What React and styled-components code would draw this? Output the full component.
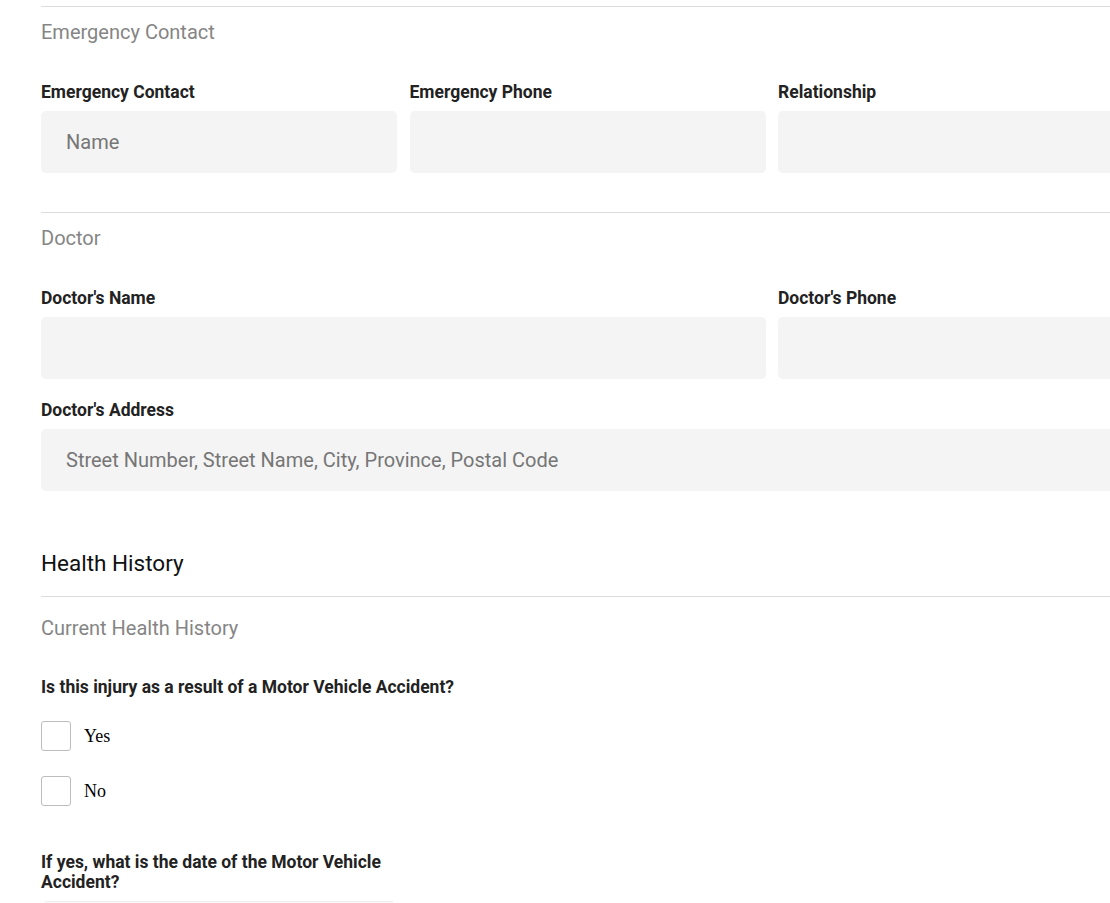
import React from 'react';
import styled, { createGlobalStyle } from 'styled-components';

const GlobalStyle = createGlobalStyle`
  html, body {
    margin: 0;
    padding: 0;
    background: #fff;
    overflow: hidden;
  }
  body {
    font-family: Roboto, "Liberation Sans", sans-serif;
  }
`;

const Page = styled.div`
  width: 1093px;
  padding: 6px 0 0 41px;
`;

const Rule = styled.hr`
  margin: 0;
  border: none;
  border-top: 1px solid #dcdcdc;
`;

const SectionTitle = styled.div`
  margin-top: ${(p) => p.$top || 13}px;
  font-size: 20px;
  line-height: 24px;
  color: #858585;
`;

const PageHeading = styled.h2`
  margin: 58px 0 19px;
  font-size: 22.5px;
  line-height: 28px;
  font-weight: 400;
  color: #111;
`;

const Grid = styled.div`
  display: grid;
  grid-template-columns: repeat(3, 356px);
  column-gap: 12.5px;
  row-gap: 21px;
  margin-top: 38px;
  margin-bottom: ${(p) => p.$bottom || 0}px;
`;

const Field = styled.div`
  display: flex;
  flex-direction: column;
  grid-column: span ${(p) => p.$span || 1};
`;

const Label = styled.label`
  font-size: 17.5px;
  line-height: 20px;
  font-weight: 700;
  color: #222;
  margin-bottom: 9px;
`;

const Input = styled.input`
  box-sizing: border-box;
  height: 62px;
  width: 100%;
  border: none;
  border-radius: 5px;
  background: #f4f4f4;
  padding: 0 25px;
  font-family: Roboto, "Liberation Sans", sans-serif;
  font-size: 20px;
  color: #333;
  outline: none;

  &::placeholder {
    color: #767676;
  }
`;

const Question = styled.div`
  margin-top: 37px;
  font-size: 17.5px;
  line-height: 20px;
  font-weight: 700;
  color: #222;
`;

const Options = styled.div`
  display: flex;
  flex-direction: column;
  gap: 25px;
  margin-top: 24px;
`;

const Option = styled.label`
  display: flex;
  align-items: center;
  gap: 13px;
  font-family: "Liberation Serif", "Times New Roman", serif;
  font-size: 18px;
  color: #000;
`;

const Box = styled.span`
  box-sizing: border-box;
  width: 30px;
  height: 30px;
  border: 1px solid #bdbdbd;
  border-radius: 3px;
  background: #fff;
`;

const DateField = styled.div`
  width: 356px;
  margin-top: 46px;
`;

const DateInput = styled.div`
  height: 40px;
  margin: 0 4px;
  border-top: 1px solid #eeeeee;
  background: #fafafa;
`;

export default function App() {
  return (
    <>
      <GlobalStyle />
      <Page>
        <Rule />
        <SectionTitle>Emergency Contact</SectionTitle>
        <Grid $bottom={39}>
          <Field>
            <Label>Emergency Contact</Label>
            <Input placeholder="Name" />
          </Field>
          <Field>
            <Label>Emergency Phone</Label>
            <Input />
          </Field>
          <Field>
            <Label>Relationship</Label>
            <Input />
          </Field>
        </Grid>

        <Rule />
        <SectionTitle>Doctor</SectionTitle>
        <Grid>
          <Field $span={2}>
            <Label>Doctor's Name</Label>
            <Input />
          </Field>
          <Field>
            <Label>Doctor's Phone</Label>
            <Input />
          </Field>
          <Field $span={3}>
            <Label>Doctor's Address</Label>
            <Input placeholder="Street Number, Street Name, City, Province, Postal Code" />
          </Field>
        </Grid>

        <PageHeading>Health History</PageHeading>
        <Rule />
        <SectionTitle $top={19}>Current Health History</SectionTitle>
        <Question>Is this injury as a result of a Motor Vehicle Accident?</Question>
        <Options>
          <Option>
            <Box />
            Yes
          </Option>
          <Option>
            <Box />
            No
          </Option>
        </Options>

        <DateField>
          <Label as="div">If yes, what is the date of the Motor Vehicle Accident?</Label>
          <DateInput />
        </DateField>
      </Page>
    </>
  );
}
